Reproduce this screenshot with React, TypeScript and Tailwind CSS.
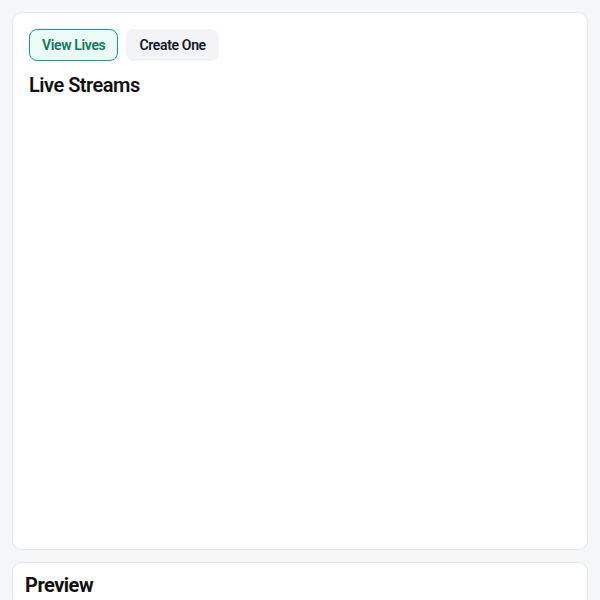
import React from "react";

export default function App() {
  return (
    <div
      className="min-h-[600px] w-[600px] bg-[#f5f6f8] px-3 pt-3 flex flex-col gap-3 tracking-tight"
      style={{ fontFamily: "Roboto, 'Noto Sans', sans-serif" }}
    >
      <div className="h-[538px] rounded-[10px] border border-[#e5e7eb] bg-white p-4 flex flex-col">
        <div className="flex gap-2">
          <button className="h-8 rounded-lg border border-[#10a37f] bg-[#e9fbf4] px-3 text-sm font-semibold tracking-tight text-[#0f7a5c]">
            View Lives
          </button>
          <button className="h-8 rounded-lg border border-transparent bg-[#f1f3f6] px-3 text-sm font-semibold tracking-tight text-[#111827]">
            Create One
          </button>
        </div>
        <h2 className="mt-2.5 text-xl font-semibold tracking-tight text-[#111111] leading-7">Live Streams</h2>
      </div>
      <div className="h-[60px] rounded-[10px] border border-[#e5e7eb] bg-white px-3 pt-2">
        <h2 className="text-xl font-bold tracking-tight text-[#111111] leading-7">Preview</h2>
      </div>
    </div>
  );
}
